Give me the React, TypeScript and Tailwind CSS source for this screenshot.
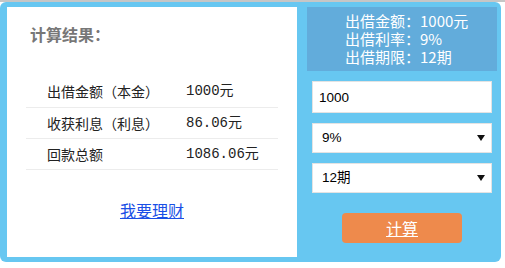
import { useState } from "react";

const cjk = { fontFamily: '"Noto Sans CJK SC", "Liberation Sans", sans-serif' };
const mono = { fontFamily: '"Liberation Mono", "Noto Sans CJK SC", monospace' };
const latin = { fontFamily: '"Liberation Sans", "Noto Sans CJK SC", sans-serif' };

const rows = [
  { label: "出借金额（本金）", value: "1000元" },
  { label: "收获利息（利息）", value: "86.06元" },
  { label: "回款总额", value: "1086.06元" },
];

function Caret() {
  return (
    <svg
      className="pointer-events-none absolute right-[7px] top-1/2 -translate-y-1/2"
      width="8"
      height="6"
      viewBox="0 0 8 6"
    >
      <path d="M0 0h8L4 6z" fill="#111" />
    </svg>
  );
}

export default function App() {
  const [amount, setAmount] = useState("1000");
  const [rate, setRate] = useState("9%");
  const [term, setTerm] = useState("12期");

  return (
    <div className="h-[268px] w-[505px] bg-white" style={cjk}>
      <div className="h-[2px] bg-[#c6c6c6]" />
      <div className="flex h-[260px] w-[501px] gap-[10px] rounded-[6px] bg-[#67c7f1] pb-[5px] pl-[7px] pr-[4px] pt-[5px]">
        {/* result panel */}
        <section className="flex w-[290px] flex-col bg-white">
          <h2 className="pl-[23px] pt-[17px] text-[16px] font-bold leading-[20px] text-[#777]">
            计算结果：
          </h2>
          <table className="ml-[19px] mt-[32px] w-[252px] border-collapse text-[14px] text-[#222]">
            <tbody>
              {rows.map((r) => (
                <tr key={r.label} className="h-[31px] border-b border-[#ececec]">
                  <td className="w-[160px] pl-[21px] leading-[30px]">{r.label}</td>
                  <td className="leading-[30px]" style={mono}>
                    {r.value}
                  </td>
                </tr>
              ))}
            </tbody>
          </table>
          <div className="mt-[28px] text-center">
            <a href="#" className="text-[16px] leading-[20px] text-[#1a4fe6] underline">
              我要理财
            </a>
          </div>
        </section>

        {/* input column */}
        <section className="flex w-[190px] flex-col">
          <div className="h-[64px] bg-[#62acdb] pl-[38px] pt-[5px] text-[15px] leading-[18px] text-white">
            <p>出借金额：1000元</p>
            <p>出借利率：9%</p>
            <p>出借期限：12期</p>
          </div>
          <div className="flex flex-col gap-[10px] px-[5px] pt-[10px]">
            <input
              value={amount}
              onChange={(e) => setAmount(e.target.value)}
              className="h-[32px] w-full border border-[#e3e3e3] bg-white pl-[6px] text-[13.5px] text-black outline-none"
              style={latin}
            />
            <div className="relative">
              <select
                value={rate}
                onChange={(e) => setRate(e.target.value)}
                className="h-[30px] w-full appearance-none rounded-none border border-[#e3e3e3] bg-white pl-[9px] text-[13.5px] text-black outline-none"
                style={latin}
              >
                <option>9%</option>
                <option>10%</option>
                <option>12%</option>
              </select>
              <Caret />
            </div>
            <div className="relative">
              <select
                value={term}
                onChange={(e) => setTerm(e.target.value)}
                className="h-[30px] w-full appearance-none rounded-none border border-[#e3e3e3] bg-white pl-[9px] text-[13.5px] text-black outline-none"
                style={latin}
              >
                <option>3期</option>
                <option>6期</option>
                <option>12期</option>
              </select>
              <Caret />
            </div>
          </div>
          <div className="flex justify-center pt-[20px]">
            <button className="h-[30px] w-[120px] rounded-[4px] bg-[#ee8a4c] text-[16px] leading-[30px] text-white underline">
              计算
            </button>
          </div>
        </section>
      </div>
    </div>
  );
}
